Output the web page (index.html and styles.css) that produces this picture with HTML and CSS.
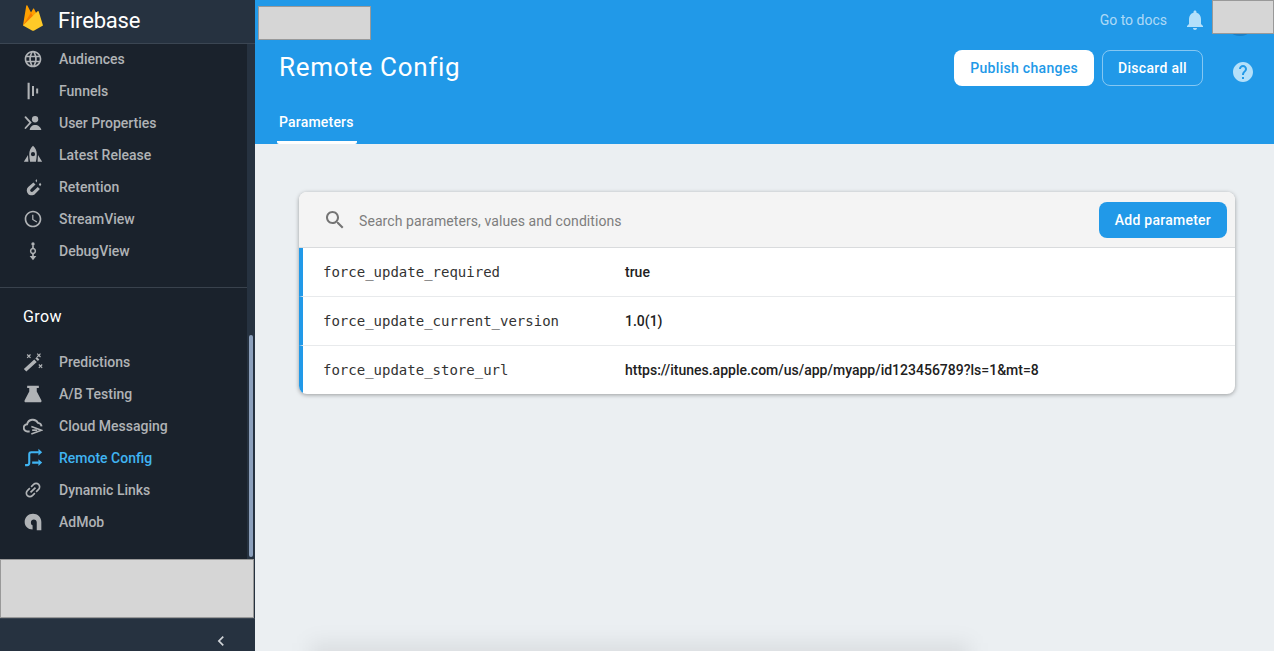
FILE: index.html
```html
<!DOCTYPE html>
<html lang="en">
<head>
  <meta charset="UTF-8">
  <title>Remote Config - Firebase</title>
  <link rel="stylesheet" href="styles.css">
</head>
<body>
  <div class="app">
    <aside class="sidebar">
      <div class="brand">
        <svg class="brand-logo" viewBox="0 0 20 26">
          <path fill="#ffa000" d="M0 20.5 3.2 1C3.3.2 4 0 4.5.8L8 7.5 10 4c.3-.6.9-.6 1.2 0L17 16z"/>
          <path fill="#f57c00" d="M11 13 8 7.5 0 20.5z"/>
          <path fill="#ffca28" d="M0 20.5 14.6 6.3c.5-.5 1.1-.3 1.2.4L20 20.5l-8.8 5c-.7.4-1.5.4-2.2 0z"/>
        </svg>
        <span class="brand-name">Firebase</span>
      </div>
      <nav class="nav">
        <ul class="nav-list">
          <li class="nav-item">
            <svg class="icon" viewBox="0 0 24 24"><path d="M11.99 2C6.47 2 2 6.48 2 12s4.47 10 9.99 10C17.52 22 22 17.52 22 12S17.52 2 11.99 2zm6.93 6h-2.95c-.32-1.25-.78-2.45-1.38-3.56 1.84.63 3.37 1.91 4.33 3.56zM12 4.04c.83 1.2 1.48 2.53 1.91 3.96h-3.82c.43-1.43 1.08-2.76 1.91-3.96zM4.26 14C4.1 13.36 4 12.69 4 12s.1-1.36.26-2h3.38c-.08.66-.14 1.32-.14 2 0 .68.06 1.34.14 2H4.26zm.82 2h2.95c.32 1.25.78 2.45 1.38 3.56-1.84-.63-3.37-1.9-4.33-3.56zm2.95-8H5.08c.96-1.66 2.49-2.93 4.33-3.56C8.81 5.55 8.35 6.75 8.03 8zM12 19.96c-.83-1.2-1.48-2.53-1.91-3.96h3.82c-.43 1.43-1.08 2.76-1.91 3.96zM14.34 14H9.66c-.09-.66-.16-1.32-.16-2 0-.68.07-1.35.16-2h4.68c.09.65.16 1.32.16 2 0 .68-.07 1.34-.16 2zm.25 5.56c.6-1.11 1.06-2.31 1.38-3.56h2.95c-.96 1.65-2.49 2.93-4.33 3.56zM16.36 14c.08-.66.14-1.32.14-2 0-.68-.06-1.34-.14-2h3.38c.16.64.26 1.31.26 2s-.1 1.36-.26 2h-3.38z"/></svg>
            Audiences
          </li>
          <li class="nav-item">
            <svg class="icon" viewBox="0 0 24 24"><path d="M5.500 2H8v20H5.500zM10.800 6h2.400v12h-2.400zM15.800 9h2.400v6h-2.400z"/></svg>
            Funnels
          </li>
          <li class="nav-item">
            <svg class="icon" viewBox="0 0 24 24"><circle cx="14.500" cy="7.500" r="3.800"/><path d="M8 20.500c.3-3.500 3-6 6.500-6s7 2.500 7.500 6z"/><path fill="none" stroke="currentColor" stroke-width="2.200" stroke-linecap="round" d="M3 5l6 6.500L3 18"/></svg>
            User Properties
          </li>
          <li class="nav-item">
            <svg class="icon" viewBox="0 0 24 24"><path fill-rule="evenodd" d="M12 1c3 2.500 4.500 6 4.500 10 0 3-.5 6-1 9h-7c-.5-3-1-6-1-9 0-4 1.500-7.500 4.500-10zm0 7.500a2.500 2.500 0 1 0 0 5 2.500 2.500 0 0 0 0-5z"/><path d="M6 12 1 20h5.500zM18 12l5 8h-5.500z"/></svg>
            Latest Release
          </li>
          <li class="nav-item">
            <svg class="icon" viewBox="0 0 24 24"><path d="M12.500 6.500 15 9l-5.800 5.800a1.900 1.900 0 0 0 0 2.700c.8.800 2 .7 2.700 0L17.700 12l2.500 2.500-5.800 5.800c-2.300 2.300-6 2.300-8.200 0s-2.300-6 0-8.200z"/><path d="M16 2.500l1 2-1 2-1-2zM20.500 7l1.500 2-1.500 2-1.500-2z"/></svg>
            Retention
          </li>
          <li class="nav-item">
            <svg class="icon" viewBox="0 0 24 24"><path d="M11.99 2C6.47 2 2 6.48 2 12s4.47 10 9.99 10C17.52 22 22 17.52 22 12S17.52 2 11.99 2zM12 20c-4.420 0-8-3.580-8-8s3.580-8 8-8 8 3.580 8 8-3.580 8-8 8zm.5-13H11v6l5.250 3.150.75-1.230-4.500-2.670z"/></svg>
            StreamView
          </li>
          <li class="nav-item">
            <svg class="icon" viewBox="0 0 24 24"><circle cx="12" cy="3.500" r="2"/><path fill-rule="evenodd" d="M11 5h2v3.200a4 4 0 0 1 0 7.600V18h3l-4 5-4-5h3v-2.200a4 4 0 0 1 0-7.600zM12 10a2 2 0 1 0 0 4 2 2 0 0 0 0-4z"/></svg>
            DebugView
          </li>
        </ul>
        <h2 class="nav-title">Grow</h2>
        <ul class="nav-list">
          <li class="nav-item">
            <svg class="icon" viewBox="0 0 24 24"><path d="M1 20.500 13.500 9l3 3L4 23.500zM14.800 7.800l1.800-1.700 3 3-1.700 1.800z"/><path d="M5.500 2.500 7 4l1.500-1.500 1 1L8 5l1.500 1.500-1 1L7 6 5.500 7.500l-1-1L6 5 4.500 3.500zM17.500 1.500 19 3l1.500-1.500 1 1L20 4l1.500 1.500-1 1L19 5l-1.500 1.500-1-1L18 4l-1.500-1.500zM19.500 14.500 21 16l1.500-1.500 1 1L22 17l1.500 1.500-1 1L21 18l-1.500 1.500-1-1L20 17l-1.500-1.500z"/></svg>
            Predictions
          </li>
          <li class="nav-item">
            <svg class="icon" viewBox="0 0 24 24"><path d="M5 2h14v2.800h-2.500V9l5.500 10.500c.6 1.200 0 2.500-1.300 2.500H3.300c-1.300 0-1.900-1.300-1.300-2.500L7.500 9V4.800H5z"/></svg>
            A/B Testing
          </li>
          <li class="nav-item">
            <svg class="icon" viewBox="0 0 24 24"><path fill="none" stroke="currentColor" stroke-width="2.300" d="M8 18.500H5.500a4.300 4.300 0 0 1-.6-8.600 7 7 0 0 1 13-1.700 5 5 0 0 1 4.400 4.300"/><path fill="none" stroke="currentColor" stroke-width="2" d="M10 12.500l12 4.500-12 4.500"/><path d="M11 16h6v2h-6z"/></svg>
            Cloud Messaging
          </li>
          <li class="nav-item is-active">
            <svg class="icon" viewBox="0 0 24 24"><path fill="none" stroke="currentColor" stroke-width="2.500" d="M2.500 20.500h2.500c1.500 0 2.500-1 2.500-2.500V7.500C7.500 6 8.500 5 10 5h9M11 17.500h8"/><path d="M18.500 1l4.500 4-4.500 4zM18.500 13.500l4.500 4-4.500 4z"/></svg>
            Remote Config
          </li>
          <li class="nav-item">
            <svg class="icon icon-link" viewBox="0 0 24 24"><path d="M3.900 12c0-1.710 1.390-3.100 3.100-3.100h4V7H7c-2.760 0-5 2.240-5 5s2.240 5 5 5h4v-1.900H7c-1.710 0-3.100-1.390-3.100-3.100zM8 13h8v-2H8v2zm9-6h-4v1.900h4c1.710 0 3.100 1.390 3.100 3.100s-1.390 3.100-3.100 3.100h-4V17h4c2.760 0 5-2.240 5-5s-2.240-5-5-5z"/></svg>
            Dynamic Links
          </li>
          <li class="nav-item">
            <svg class="icon" viewBox="0 0 24 24"><path d="M2 12C2 6 6.500 2 12 2s10 4 10 10v10h-5.500V12.500c0-2-1.500-3.500-3.500-3.500s-3.500 1.500-3.500 3.500c0 1.500.5 3 2 3.500v5C6 21 2 17 2 12z"/></svg>
            AdMob
          </li>
        </ul>
        <div class="scroll-thumb"></div>
      </nav>
      <div class="redacted redacted-plan"></div>
      <div class="collapse">
        <svg class="collapse-icon" viewBox="0 0 24 24"><path d="M15.410 7.410 14 6l-6 6 6 6 1.410-1.410L10.830 12z"/></svg>
      </div>
    </aside>

    <main class="content">
      <header class="topbar">
        <div class="avatar"></div>
        <div class="redacted redacted-project"></div>
        <div class="redacted redacted-user"></div>
        <div class="topnav">
          <a class="docs-link">Go to docs</a>
          <svg class="bell" viewBox="0 0 24 24"><path d="M12 22c1.100 0 2-.9 2-2h-4c0 1.100.89 2 2 2zm6-6v-5c0-3.070-1.640-5.640-4.500-6.320V4c0-.83-.67-1.500-1.500-1.500s-1.500.67-1.500 1.500v.68C7.630 5.360 6 7.920 6 11v5l-2 2v1h16v-1l-2-2z"/></svg>
        </div>
        <div class="page-head">
          <h1 class="page-title">Remote Config</h1>
          <button class="btn btn-white">Publish changes</button>
          <button class="btn btn-outline">Discard all</button>
          <svg class="help" viewBox="0 0 24 24"><path d="M12 2C6.480 2 2 6.480 2 12s4.480 10 10 10 10-4.480 10-10S17.520 2 12 2zm1 17h-2v-2h2v2zm2.070-7.750-.9.92C13.450 12.900 13 13.500 13 15h-2v-.5c0-1.100.45-2.100 1.170-2.830l1.240-1.260c.37-.36.59-.86.59-1.410 0-1.100-.9-2-2-2s-2 .9-2 2H8c0-2.210 1.790-4 4-4s4 1.790 4 4c0 .88-.36 1.680-.93 2.250z"/></svg>
        </div>
        <div class="tabs">
          <a class="tab">Parameters</a>
        </div>
      </header>

      <section class="card">
        <div class="card-toolbar">
          <svg class="search-icon" viewBox="0 0 24 24"><path d="M15.500 14h-.79l-.28-.27C15.410 12.590 16 11.110 16 9.500 16 5.910 13.090 3 9.500 3S3 5.910 3 9.500 5.910 16 9.500 16c1.610 0 3.090-.59 4.230-1.570l.27.28v.79l5 4.990L20.490 19l-4.990-5zm-6 0C7.010 14 5 11.990 5 9.500S7.010 5 9.500 5 14 7.010 14 9.500 11.990 14 9.500 14z"/></svg>
          <input class="search-input" type="text" placeholder="Search parameters, values and conditions">
          <button class="btn btn-blue">Add parameter</button>
        </div>
        <div class="param-row">
          <span class="param-key">force_update_required</span>
          <span class="param-value">true</span>
        </div>
        <div class="param-row">
          <span class="param-key">force_update_current_version</span>
          <span class="param-value">1.0(1)</span>
        </div>
        <div class="param-row">
          <span class="param-key">force_update_store_url</span>
          <span class="param-value">https://itunes.apple.com/us/app/myapp/id123456789?ls=1&amp;mt=8</span>
        </div>
      </section>

      <div class="fold-shadow"></div>
    </main>
  </div>
</body>
</html>
```

FILE: styles.css
```css
html, body {
  height: 100%;
  margin: 0;
  overflow: hidden;
}
body {
  font-family: Roboto, Arial, sans-serif;
  background-color: #ebeff2;
  color: #212121;
}
.app {
  display: flex;
  height: 100%;
}
.redacted {
  background: #d6d6d6;
  border: 1px solid #999;
  box-sizing: border-box;
}

/* sidebar */
.sidebar {
  width: 255px;
  flex: none;
  display: flex;
  flex-direction: column;
  background: #263240;
}
.brand {
  height: 43px;
  flex: none;
  display: flex;
  align-items: center;
  border-bottom: 1px solid #3b4653;
}
.brand-logo {
  width: 20px;
  height: 26px;
  margin-left: 23px;
  margin-top: -7px;
}
.brand-name {
  margin: -2px 0 0 15px;
  font-size: 22px;
  color: #fff;
  letter-spacing: -0.2px;
}
.nav {
  flex: none;
  height: 515px;
  width: 247px;
  background: #1a222c;
  position: relative;
}
.nav-list {
  list-style: none;
  margin: 0;
  padding: 0;
}
.nav-list:first-child {
  margin-top: -1px;
  padding-bottom: 20px;
  border-bottom: 1px solid #39424d;
}
.nav-item {
  height: 32px;
  display: flex;
  align-items: center;
  padding-left: 23px;
  font-size: 14px;
  font-weight: 500;
  color: #b0b3b6;
}
.nav-item.is-active {
  color: #40b4f2;
}
.icon {
  width: 20px;
  height: 20px;
  flex: none;
  margin-right: 16px;
  fill: currentColor;
}
.icon-link {
  transform: rotate(-45deg) scale(1.05);
}
.nav-title {
  margin: 0;
  padding: 20px 0 20px 23px;
  font-size: 16px;
  line-height: 18px;
  font-weight: 400;
  letter-spacing: 0.4px;
  color: #fff;
}
.scroll-thumb {
  position: absolute;
  left: 249px;
  top: 291px;
  width: 4px;
  height: 222px;
  border-radius: 2px;
  background: #8ca0bc;
}
.redacted-plan {
  flex: none;
  height: 59px;
  width: 254px;
}
.collapse {
  flex: 1;
  display: flex;
  justify-content: flex-end;
  align-items: center;
  padding-right: 24px;
  border-top: 1px solid #3b4653;
}
.collapse-icon {
  width: 20px;
  height: 20px;
  fill: #d0d4d8;
  margin-top: 11px;
}

/* main area */
.content {
  flex: 1;
  position: relative;
  min-width: 0;
  overflow: hidden;
}
.topbar {
  height: 144px;
  background: #2199e8;
  position: relative;
  color: #fff;
  display: flex;
  flex-direction: column;
}
.redacted-project {
  position: absolute;
  left: 3px;
  top: 6px;
  width: 113px;
  height: 34px;
}
.redacted-user {
  position: absolute;
  right: 0;
  top: 0;
  width: 62px;
  height: 34px;
}
.avatar {
  position: absolute;
  right: 18px;
  top: 4px;
  width: 32px;
  height: 32px;
  border-radius: 50%;
  background: #1b80c8;
}
.topnav {
  height: 40px;
  display: flex;
  align-items: center;
  justify-content: flex-end;
  padding-right: 67px;
}
.docs-link {
  font-size: 14px;
  font-weight: 400;
  color: rgba(255, 255, 255, 0.65);
}
.bell {
  width: 24px;
  height: 24px;
  margin-left: 16px;
  fill: #b4e0fa;
}
.page-head {
  display: flex;
  align-items: center;
  height: 36px;
  margin-top: 10px;
  padding-left: 24px;
}
.page-title {
  margin: 0 auto 2px 0;
  font-size: 26px;
  font-weight: 400;
  letter-spacing: 0.7px;
}
.btn {
  height: 36px;
  padding: 0 15px;
  font-family: inherit;
  font-size: 14px;
  font-weight: 500;
  letter-spacing: 0.3px;
  border-radius: 8px;
  border: 1px solid transparent;
  box-sizing: border-box;
}
.btn-white {
  background: #fff;
  color: #2199e8;
}
.btn-outline {
  background: transparent;
  color: #fff;
  border-color: rgba(255, 255, 255, 0.45);
  margin-left: 8px;
}
.btn-blue {
  background: #2199e8;
  color: #fff;
  letter-spacing: 0.25px;
}
.help {
  width: 24px;
  height: 24px;
  margin: 8px 19px 0 28px;
  fill: #b4e0fa;
}
.tabs {
  margin-top: auto;
  padding-left: 22px;
  display: flex;
}
.tab {
  padding: 0 2px;
  width: 76px;
  height: 38px;
  line-height: 39px;
  font-size: 14px;
  font-weight: 500;
  letter-spacing: 0.2px;
  border-bottom: 3px solid #fff;
  border-radius: 0 0 2px 2px;
}

/* parameters card */
.card {
  margin: 48px 39px 0 44px;
  background: #fff;
  border-radius: 8px;
  overflow: hidden;
  box-shadow: 0 1px 4px rgba(0, 0, 0, 0.35);
}
.card-toolbar {
  height: 55px;
  display: flex;
  align-items: center;
  background: #f4f4f4;
  border-bottom: 1px solid #d9dbdd;
  padding: 0 8px 0 24px;
}
.search-icon {
  width: 24px;
  height: 24px;
  fill: #757575;
  flex: none;
}
.search-input {
  flex: 1;
  margin: 2px 0 0 12px;
  border: 0;
  padding: 0;
  outline: 0;
  background: transparent;
  font-family: inherit;
  font-size: 14px;
  letter-spacing: 0.08px;
}
.search-input::placeholder {
  color: #7d7d7d;
  opacity: 1;
}
.param-row {
  height: 48px;
  display: flex;
  align-items: center;
  border-left: 4px solid #2199e8;
  border-bottom: 1px solid #e8eaec;
}
.param-row:last-child {
  border-bottom: 0;
}
.param-key {
  width: 302px;
  padding-left: 20px;
  flex: none;
  font-family: "DejaVu Sans Mono", monospace;
  font-size: 14px;
  color: #333;
}
.param-value {
  font-size: 14px;
  font-weight: 500;
  color: #212121;
}
.fold-shadow {
  position: absolute;
  left: 55px;
  bottom: -22px;
  width: 660px;
  height: 30px;
  background: rgba(0, 0, 0, 0.07);
  filter: blur(10px);
}
```
